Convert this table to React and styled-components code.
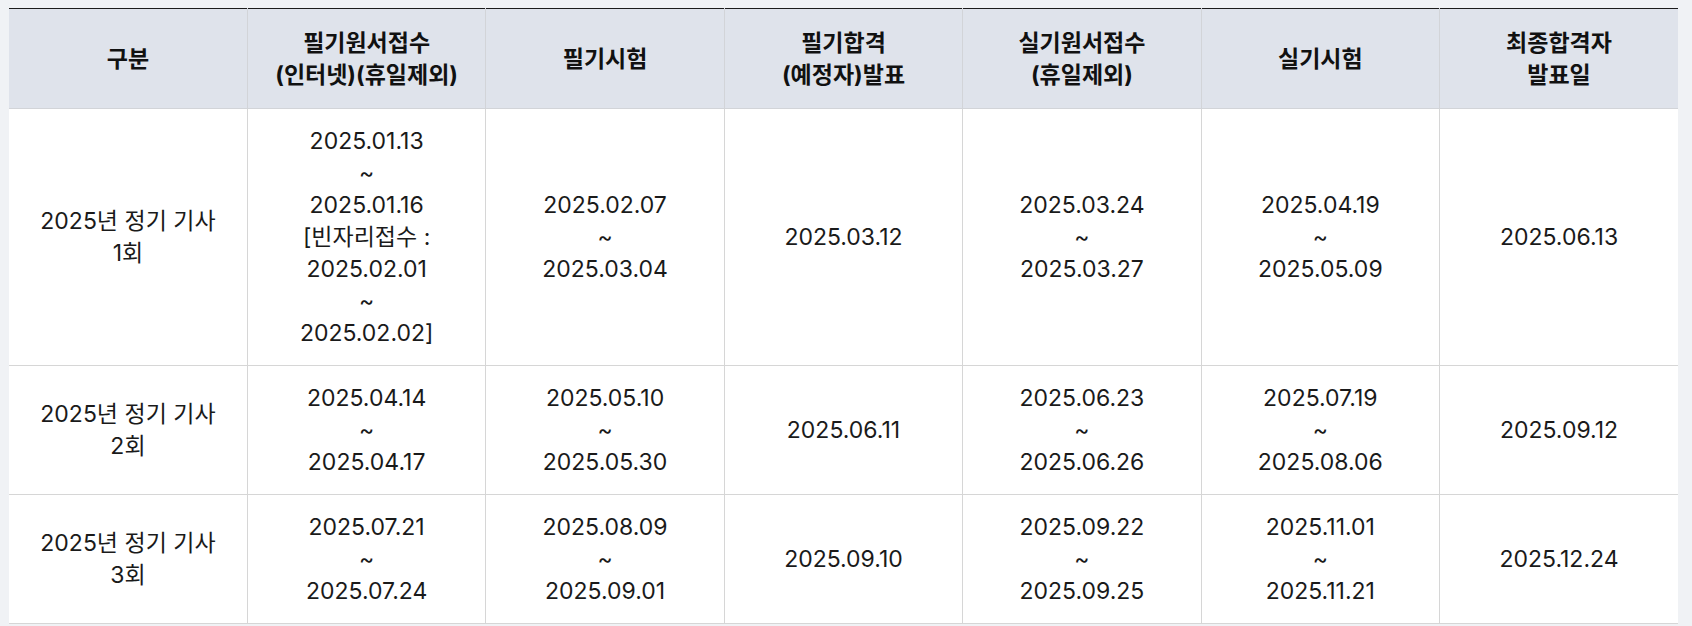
import React from "react";
import styled, { createGlobalStyle } from "styled-components";

const GlobalStyle = createGlobalStyle`
    html, body {
        margin: 0;
        padding: 0;
        background: #f0f2f5;
    }
    body {
        font-family: Inter, "Noto Sans CJK KR", sans-serif;
    }
`;

const headers = [
    ["구분"],
    ["필기원서접수", "(인터넷)(휴일제외)"],
    ["필기시험"],
    ["필기합격", "(예정자)발표"],
    ["실기원서접수", "(휴일제외)"],
    ["실기시험"],
    ["최종합격자", "발표일"],
];

const rows = [
    [
        ["2025년 정기 기사", "1회"],
        ["2025.01.13", "~", "2025.01.16", "[빈자리접수 :", "2025.02.01", "~", "2025.02.02]"],
        ["2025.02.07", "~", "2025.03.04"],
        ["2025.03.12"],
        ["2025.03.24", "~", "2025.03.27"],
        ["2025.04.19", "~", "2025.05.09"],
        ["2025.06.13"],
    ],
    [
        ["2025년 정기 기사", "2회"],
        ["2025.04.14", "~", "2025.04.17"],
        ["2025.05.10", "~", "2025.05.30"],
        ["2025.06.11"],
        ["2025.06.23", "~", "2025.06.26"],
        ["2025.07.19", "~", "2025.08.06"],
        ["2025.09.12"],
    ],
    [
        ["2025년 정기 기사", "3회"],
        ["2025.07.21", "~", "2025.07.24"],
        ["2025.08.09", "~", "2025.09.01"],
        ["2025.09.10"],
        ["2025.09.22", "~", "2025.09.25"],
        ["2025.11.01", "~", "2025.11.21"],
        ["2025.12.24"],
    ],
];

function Lines({ lines }) {
    return lines.map((line, i) => (
        <React.Fragment key={i}>
            {i > 0 && <br />}
            {line}
        </React.Fragment>
    ));
}

function App() {
    return (
        <>
            <GlobalStyle />
            <Page>
                <Schedule>
                    <thead>
                        <tr>
                            {headers.map((h, i) => (
                                <HeadCell key={i}>
                                    <Lines lines={h} />
                                </HeadCell>
                            ))}
                        </tr>
                    </thead>
                    <tbody>
                        {rows.map((row, r) => (
                            <tr key={r}>
                                {row.map((cell, c) => (
                                    <Cell key={c}>
                                        <Lines lines={cell} />
                                    </Cell>
                                ))}
                            </tr>
                        ))}
                    </tbody>
                </Schedule>
            </Page>
        </>
    );
}

const Page = styled.div`
    padding: 8px 14px 0 9px;
`;

const Schedule = styled.table`
    width: 100%;
    table-layout: fixed;
    border-collapse: collapse;
    border-top: 1px solid #1c1c1c;
    background: #fff;
    font-size: 23px;
    line-height: 32px;
    color: #1a1a1a;
`;

const HeadCell = styled.th`
    height: 99px;
    padding: 0 6px;
    background: #dfe3eb;
    color: #111;
    font-weight: 700;
    text-align: center;
    vertical-align: middle;
    border-left: 1px solid #d2d4d8;
    border-bottom: 1px solid #d2d4d8;

    &:first-child {
        border-left: none;
    }
`;

const Cell = styled.td`
    padding: 16px 6px;
    text-align: center;
    vertical-align: middle;
    font-weight: 400;
    border-left: 1px solid #d6d6d6;
    border-bottom: 1px solid #d6d6d6;

    &:first-child {
        border-left: none;
    }
`;

export default App;
